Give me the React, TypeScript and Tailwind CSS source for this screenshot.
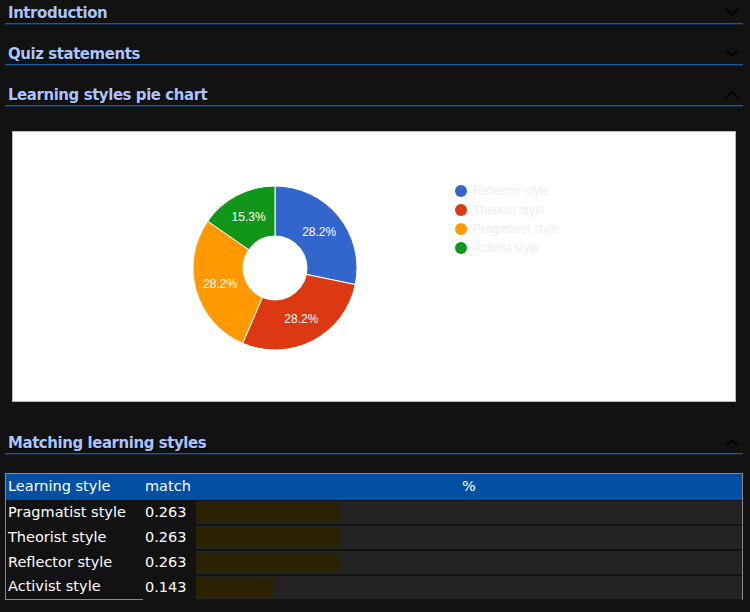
import * as React from 'react'

// ── Data ──────────────────────────────────────────────────────────────────────
const slices = [
  { label: 'Reflector style',  value: 28.2, color: '#3366cc' },
  { label: 'Theorist style',   value: 28.2, color: '#dc3912' },
  { label: 'Pragmatist style', value: 28.2, color: '#ff9900' },
  { label: 'Activist style',   value: 15.3, color: '#109618' },
]

const rows = [
  { name: 'Pragmatist style', match: 0.263 },
  { name: 'Theorist style',   match: 0.263 },
  { name: 'Reflector style',  match: 0.263 },
  { name: 'Activist style',   match: 0.143 },
]

// ── Section header ────────────────────────────────────────────────────────────
function Header({ title, open }: { title: string; open?: boolean }) {
  return (
    <div className="relative">
      <div className="flex items-end h-[21px] pl-[3px]">
        <h2 className="text-[15px] font-bold tracking-[-0.45px] leading-none text-[#a9c5ff] [text-shadow:1px_1px_1px_#000] pb-[2px]">
          {title}
        </h2>
      </div>
      <div className="h-[1px] bg-[#1c5796]" />
      <div className="h-[1px] bg-[#0f2c4c]" />
      <svg className="absolute right-[4px] top-[6px]" width="14" height="9" viewBox="0 0 14 9">
        <polyline
          points={open ? '1,8 7,2 13,8' : '1,1 7,7 13,1'}
          fill="none" stroke="#050505" strokeWidth="2.2"
        />
      </svg>
    </div>
  )
}

// ── Donut ─────────────────────────────────────────────────────────────────────
function Donut() {
  const cx = 83, cy = 83, R = 82, r = 32
  const total = slices.reduce((s, x) => s + x.value, 0)
  let acc = 0
  const pt = (a: number, rad: number) =>
    [cx + rad * Math.sin(a), cy - rad * Math.cos(a)]

  return (
    <svg width="166" height="166" viewBox="0 0 166 166">
      {slices.map(s => {
        const a0 = (acc / total) * Math.PI * 2
        acc += s.value
        const a1 = (acc / total) * Math.PI * 2
        const large = a1 - a0 > Math.PI ? 1 : 0
        const [x0, y0] = pt(a0, R), [x1, y1] = pt(a1, R)
        const [x2, y2] = pt(a1, r), [x3, y3] = pt(a0, r)
        const mid = (a0 + a1) / 2
        const [lx, ly] = pt(mid, 57)
        return (
          <g key={s.label}>
            <path
              d={`M${x0},${y0} A${R},${R} 0 ${large} 1 ${x1},${y1} L${x2},${y2} A${r},${r} 0 ${large} 0 ${x3},${y3} Z`}
              fill={s.color} stroke="#fff" strokeWidth="1"
            />
            <text x={lx} y={ly + 4} textAnchor="middle" fill="#fff"
              style={{ fontFamily: '"Liberation Sans", Arial, sans-serif', fontSize: 12 }}>
              {s.value.toFixed(1)}%
            </text>
          </g>
        )
      })}
    </svg>
  )
}

// ── App ───────────────────────────────────────────────────────────────────────
export default function App() {
  return (
    <div className="min-h-[612px] w-[750px] bg-[#121212] font-['DejaVu_Sans',sans-serif] pt-[2px]">
      <div className="w-[738px] ml-[5px]">
        <div className="mb-[18px]"><Header title="Introduction" /></div>
        <div className="mb-[18px]"><Header title="Quiz statements" /></div>
        <Header title="Learning styles pie chart" open />

        {/* Chart */}
        <div className="mt-[24px] ml-[7px] w-[724px] h-[271px] bg-white border border-[#b9b9b9] flex items-start">
          <div className="ml-[179px] mt-[53px]"><Donut /></div>
          <ul className="ml-[97px] mt-[52px] flex flex-col gap-[5px] font-['Liberation_Sans',Arial,sans-serif] text-[12px] text-[#eeeeee]">
            {slices.map(s => (
              <li key={s.label} className="flex items-center gap-[6px] h-[14px]">
                <span className="w-[12px] h-[12px] rounded-full" style={{ background: s.color }} />
                {s.label}
              </li>
            ))}
          </ul>
        </div>

        <div className="mt-[30px]"><Header title="Matching learning styles" open /></div>

        {/* Table */}
        <div className="mt-[18px] border-l border-t border-r border-[#8d8a85] text-[14.5px] text-white">
          <div className="flex h-[26px] items-center bg-[#0250a3]">
            <div className="w-[137px] pl-[2px]">Learning style</div>
            <div className="w-[53px] pl-[2px]">match</div>
            <div className="flex-1 text-center">%</div>
          </div>
          {rows.map((row, i) => (
            <div key={row.name} className="flex h-[25px] items-stretch">
              <div className={`w-[137px] pl-[2px] flex items-center ${i === rows.length - 1 ? 'border-b border-[#8d8a85]' : ''}`}>{row.name}</div>
              <div className="w-[53px] pl-[2px] flex items-center">{row.match.toFixed(3)}</div>
              <div className="flex-1 my-[1px] bg-[#232323] flex items-stretch">
                <div className="my-[2px] bg-[#2a2200]" style={{ width: `${row.match * 100}%` }} />
              </div>
            </div>
          ))}
        </div>
      </div>
    </div>
  )
}
